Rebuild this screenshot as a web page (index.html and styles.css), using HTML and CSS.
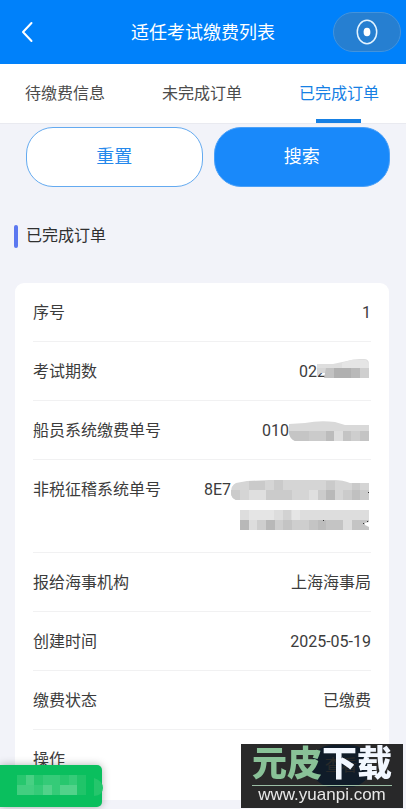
FILE: index.html
```html
<!DOCTYPE html>
<html lang="zh-CN">
<head>
<meta charset="utf-8">
<meta name="viewport" content="width=device-width, initial-scale=1">
<title>适任考试缴费列表</title>
<link rel="stylesheet" href="styles.css">
</head>
<body>
<header class="header">
  <button class="back" type="button" aria-label="返回">
    <svg width="12" height="22" viewBox="0 0 12 22"><path d="M10.500 2L2 11L10.500 20" fill="none" stroke="#fff" stroke-width="2" stroke-linecap="round" stroke-linejoin="round"/></svg>
  </button>
  <h1 class="title">适任考试缴费列表</h1>
  <button class="capsule" type="button" aria-label="关闭">
    <svg width="22" height="26" viewBox="0 0 22 26"><ellipse cx="11" cy="13" rx="9.700" ry="11.700" fill="none" stroke="#e4f4ff" stroke-width="1.500"/><ellipse cx="11" cy="13" rx="3.400" ry="4.300" fill="#fff"/></svg>
  </button>
</header>
<nav class="tabs">
  <a class="tab" href="#pending">待缴费信息</a>
  <a class="tab" href="#unfinished">未完成订单</a>
  <a class="tab tab-active" href="#finished" aria-current="page">已完成订单</a>
</nav>
<main>
  <div class="actions">
    <button class="btn" type="button">重置</button>
    <button class="btn btn-primary" type="button">搜索</button>
  </div>
  <h2 class="section-title">已完成订单</h2>
  <dl class="card">
    <div class="row"><dt>序号</dt><dd>1</dd></div>
    <div class="row"><dt>考试期数</dt><dd class="masked"><span>022</span>
      <svg class="mask mask-overlap" width="52" height="26" viewBox="0 0 52 26"><path d="M0 5H16L30 2Q36 0 43 0H47Q52 0 52 5V12H0Z" fill="#dedede"/><path d="M25 4L34 1H49L52 5V10H25Z" fill="#e5e5e5"/><path d="M0 9H9V14H4L0 17Z" fill="#d6d6d6"/><path d="M9 9H52V19H7Z" fill="#c2c2c2"/><path d="M17 9H34V19H17Z" fill="#b0b0b0"/><path d="M34 9H43V19H34Z" fill="#b9b9b9"/><path d="M43 9H52V19H43Z" fill="#cfcfcf"/></svg></dd></div>
    <div class="row"><dt>船员系统缴费单号</dt><dd class="masked"><span>010</span>
      <svg class="mask" width="80" height="20" viewBox="0 0 80 20"><path d="M0 3L16 2Q31 -1 46 1L56 4H80V20H6Q1 18 0 12Z" fill="#d9d9d9"/><path d="M0 10H20V20H6Q1 18 0 12Z" fill="#c5c5c5"/><path d="M20 10H37V20H20Z" fill="#cbcbcb"/><path d="M37 10H45V20H37Z" fill="#bcbcbc"/><path d="M45 10H54V20H45Z" fill="#dedede"/><path d="M54 10H80V20H54Z" fill="#c4c4c4"/><path d="M62 10H71V20H62Z" fill="#cecece"/></svg></dd></div>
    <div class="row"><dt>非税征稽系统单号</dt><dd class="masked masked-long"><span>8E7</span>
      <svg class="mask" width="138" height="20" viewBox="0 0 138 20"><path d="M5 3L16 1L38 0H103Q112 0 119 3H138V20H5Q0 18 0 13Q0 5 5 3Z" fill="#d5d5d5"/><path d="M18 1H34V10H18ZM43 0H52V10H43ZM95 1H104V10H95ZM121 3H129V10H121Z" fill="#cacaca"/><path d="M0 10H9V20H5Q0 18 0 13ZM35 10H61V20H35ZM87 10H95V20H87ZM112 10H138V20H112Z" fill="#cbcbcb"/><path d="M18 10H35V20H18ZM78 10H87V20H78Z" fill="#dfdfdf"/><path d="M95 10H104V20H95Z" fill="#b9b9b9"/><path d="M121 10H129V20H121Z" fill="#c0c0c0"/><path d="M137 12h1v1h-1z" fill="#333"/></svg>
      <svg class="mask mask-line" width="129" height="20" viewBox="0 0 129 20"><path d="M0 0H129V20H0Z" fill="#dddddd"/><path d="M9 0H34V10H9ZM52 0H60V10H52Z" fill="#e5e5e5"/><path d="M43 0H51V10H43Z" fill="#d2d2d2"/><path d="M0 10H9V20H0ZM26 10H35V20H26Z" fill="#b8b8b8"/><path d="M17 10H26V20H17ZM35 10H69V20H35Z" fill="#cecece"/><path d="M43 10H52V20H43ZM69 10H103V20H69ZM112 10H129V20H112Z" fill="#c4c4c4"/><path d="M78 10H86V20H78Z" fill="#bcbcbc"/><path d="M125 13L129 12V17L125 15Z" fill="#fff"/><path d="M123 13h1v1h-1zM127 11h1v1h-1zM83 10h1v1h-1z" fill="#333"/></svg></dd></div>
    <div class="row"><dt>报给海事机构</dt><dd>上海海事局</dd></div>
    <div class="row"><dt>创建时间</dt><dd>2025-05-19</dd></div>
    <div class="row"><dt>缴费状态</dt><dd>已缴费</dd></div>
    <div class="row"><dt>操作</dt><dd><button class="view" type="button">查看</button></dd></div>
  </dl>
</main>
<div class="toast">
  <svg width="103" height="42" viewBox="0 0 103 42"><path d="M94 13Q103 16 103 23Q103 30 94 31Z" fill="#25c66c"/><path d="M17 10H86V30H17Z" fill="#35cb78"/><path d="M26 10H34V20H26Z" fill="#48d083"/><path d="M34 10H43V20H34ZM60 10H69V20H60ZM17 10H26V20H17Z" fill="#27c76e"/><path d="M77 10H86V30H77Z" fill="#20c469"/><path d="M43 20H52V30H43ZM60 20H77V30H60Z" fill="#52d28a"/><path d="M17 20H34V30H17Z" fill="#42ce80"/></svg>
</div>
<aside class="watermark">
  <div class="brand"><span class="brand-green">元皮</span><span class="brand-white">下载</span></div>
  <div class="site">www.yuanpi.com</div>
</aside>
</body>
</html>
```
FILE: styles.css
```css
* { box-sizing: border-box; }

body {
  margin: 0;
  background: #f2f3f9;
  color: #3c3c3c;
  font: 16px/30px Roboto, "Noto Sans CJK SC", sans-serif;
}

button { padding: 0; border: 0; font: inherit; }

.header {
  display: grid;
  grid-template-columns: 68px 1fr 68px;
  align-items: center;
  height: 64px;
  padding: 0 5px;
  background: #0081fa;
  color: #fff;
}

.back { display: flex; align-items: center; width: 44px; height: 44px; padding-left: 16px; background: none; }
.title { margin: 0; padding-top: 2px; font-size: 18px; font-weight: 400; text-align: center; }

.capsule {
  display: flex;
  align-items: center;
  justify-content: center;
  height: 40px;
  border: 1px solid #4393dc;
  border-radius: 20px;
  background: #267fd1;
}

.tabs {
  display: flex;
  justify-content: space-between;
  height: 60px;
  padding: 0 27px 0 25px;
  border-bottom: 1px solid #e9eaf0;
  background: #fff;
}

.tab {
  display: flex;
  flex-direction: column;
  align-items: center;
  padding-top: 15px;
  color: #4c4c4c;
  text-decoration: none;
}

.tab-active { color: #1680e4; }
.tab-active::after { content: ""; width: 45px; height: 4px; margin-top: auto; background: #1680e4; }

.actions { display: flex; gap: 11px; padding: 3px 16px 0 26px; }

.btn {
  flex: 1;
  height: 60px;
  border: 1px solid #64aaf0;
  border-radius: 27px;
  background: #fff;
  color: #2588eb;
  font-size: 18px;
}

.btn-primary { border-color: #4aa0f8; background: #1989fa; color: #fff; }

.section-title {
  display: flex;
  align-items: center;
  gap: 8px;
  margin: 34px 14px 32px;
  color: #303030;
  font-size: 16px;
  font-weight: 400;
}

.section-title::before { content: ""; width: 4px; height: 23px; border-radius: 2px; background: #5c78f0; }

.card {
  margin: 0 17px 8px 15px;
  padding: 0 18px;
  border-radius: 9px;
  background: #fff;
}

.row {
  display: flex;
  justify-content: space-between;
  padding: 15px 0 13px;
  border-bottom: 1px solid #f1f1f2;
}

.row:last-child { border-bottom: 0; }
dd { margin: 0; }

.masked { display: flex; align-items: center; padding-right: 2px; }
.masked-long { flex-wrap: wrap; justify-content: flex-end; width: 168px; padding-bottom: 4px; }
.mask { flex: none; }
.mask-overlap { margin-left: -9px; }
.mask-line { margin: 5px 0; }

.view {
  width: 60px;
  height: 42px;
  border-radius: 21px;
  background: #1989fa;
  color: #fff;
}

.toast {
  position: fixed;
  left: 0;
  bottom: 2px;
  width: 102px;
  height: 42px;
  border-radius: 0 5px 5px 0;
  background: #0abf5e;
  box-shadow: 0 0 8px #0000004d;
}

.toast svg { display: block; overflow: visible; }

.watermark {
  position: fixed;
  right: 3px;
  bottom: 1px;
  width: 162px;
  height: 64px;
  padding: 2px 11px 0;
  background: #101010e4;
  color: #e8e8e8;
  text-align: center;
}

.brand {
  display: flex;
  justify-content: center;
  height: 40px;
  border-bottom: 1px solid #9bbda4;
  font-size: 35px;
  font-style: oblique 8deg;
  font-weight: 900;
  line-height: 38px;
}

.brand-green { color: #89c197; }
.brand-white { color: #f2f7ff; }
.site { font: 17px/18px "Liberation Sans", sans-serif; }
```
